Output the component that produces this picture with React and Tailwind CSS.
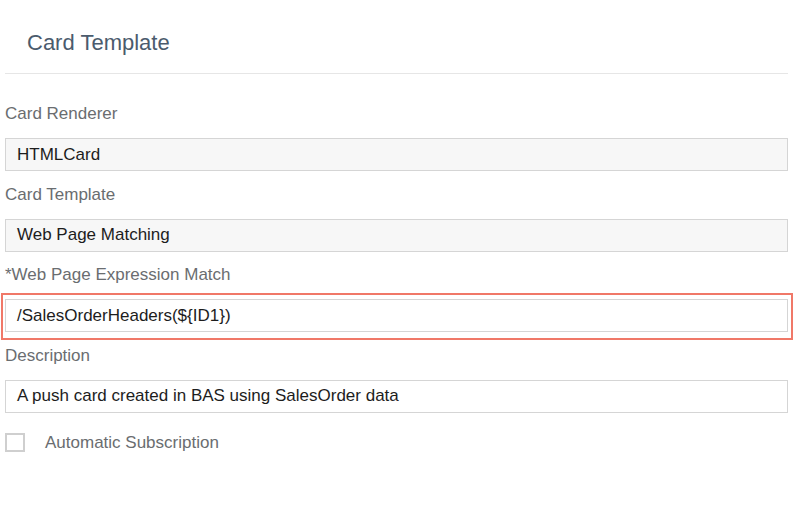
import React from 'react';

const Field = ({ label, value, readOnly = true, highlight = false }) => {
  return (
    <div>
      <div className="h-6 leading-6 text-[17px] text-[#6a6d70]">{label}</div>
      <div className="relative mt-3">
        <div
          className={`h-[33px] border border-[#d5d5d5] px-[11px] flex items-center text-[17px] text-[#1d1d1d] ${
            readOnly ? 'bg-[#f7f7f7]' : 'bg-white'
          }`}
        >
          {value}
        </div>
        {highlight && (
          <div className="absolute -left-1 -top-1.5 -right-[5px] -bottom-2 border-2 border-[#f07868] pointer-events-none"></div>
        )}
      </div>
    </div>
  );
};

export default function App() {
  return (
    <div className="w-[800px] h-[518px] bg-white font-['Liberation_Sans',Arial,sans-serif] overflow-hidden">
      {/* Header */}
      <div className="h-[73px] flex items-center pl-[27px] pt-[12px]">
        <h1 className="text-[22px] text-[#4b5b6d]">Card Template</h1>
      </div>
      <div className="ml-[5px] w-[783px] h-px bg-[#e6e6e6]"></div>

      {/* Form */}
      <div className="pl-[5px] w-[788px] pt-[28px] flex flex-col gap-[11.5px]">
        <Field label="Card Renderer" value="HTMLCard" />
        <Field label="Card Template" value="Web Page Matching" />
        <Field label="*Web Page Expression Match" value="/SalesOrderHeaders(${ID1})" readOnly={false} highlight />
        <Field label="Description" value="A push card created in BAS using SalesOrder data" readOnly={false} />
        <label className="flex items-center gap-5 mt-[6px]">
          <span className="w-5 h-[19px] border-2 border-[#cfcfcf] bg-white"></span>
          <span className="text-[17px] text-[#6a6d70]">Automatic Subscription</span>
        </label>
      </div>
    </div>
  );
}
